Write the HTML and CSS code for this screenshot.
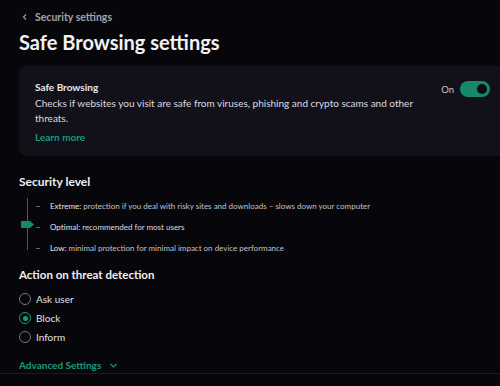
FILE: index.html
```html
<!DOCTYPE html>
<html lang="en">
  <head>
    <meta charset="UTF-8" />
    <meta name="viewport" content="width=device-width, initial-scale=1.0" />
    <title>Safe Browsing settings</title>
    <link rel="stylesheet" href="styles.css">
  </head>
  <body>
    <div class="page">
      <!-- start header -->
      <a class="back-link" href="#">
        <svg class="back-icon" width="8" height="8" viewBox="0 0 8 8">
          <path d="M5 1.5 L2.5 4 L5 6.5" fill="none" stroke="#9a9aa2" stroke-width="1.2" />
        </svg>
        Security settings
      </a>
      <h1 class="page-title">Safe Browsing settings</h1>
      <!-- end header -->

      <!-- start card -->
      <div class="card">
        <div class="card-text">
          <p class="card-title">Safe Browsing</p>
          <p class="card-desc">Checks if websites you visit are safe from viruses, phishing and crypto scams and other threats.</p>
          <a class="learn-more" href="#">Learn more</a>
        </div>
        <div class="toggle-wrap">
          <span class="toggle-label">On</span>
          <button class="toggle is-on" onclick="toggleSwitch()"></button>
        </div>
      </div>
      <!-- end card -->

      <!-- start security level -->
      <h2 class="section-title">Security level</h2>
      <div class="levels">
        <div class="level-track">
          <div class="level-thumb"></div>
        </div>
        <ul class="level-list">
          <li class="level-item"><b>Extreme:</b> protection if you deal with risky sites and downloads – slows down your computer</li>
          <li class="level-item is-active"><b>Optimal:</b> recommended for most users</li>
          <li class="level-item"><b>Low:</b> minimal protection for minimal impact on device performance</li>
        </ul>
      </div>
      <!-- end security level -->

      <!-- start action -->
      <h2 class="section-title action-title">Action on threat detection</h2>
      <div class="radios">
        <label class="radio-row"><span class="radio"></span>Ask user</label>
        <label class="radio-row"><span class="radio is-checked"></span>Block</label>
        <label class="radio-row"><span class="radio"></span>Inform</label>
      </div>
      <a class="advanced" href="#">
        Advanced Settings
        <svg width="9" height="9" viewBox="0 0 9 9">
          <path d="M1.5 3 L4.5 6 L7.5 3" fill="none" stroke="#1a9a7b" stroke-width="1.1" />
        </svg>
      </a>
      <!-- end action -->
    </div>
    <div class="bottom-bar"></div>
    <script>
      function toggleSwitch() {
        const el = document.querySelector(".toggle");
        el.classList.toggle("is-on");
        document.querySelector(".toggle-label").innerHTML = el.classList.contains("is-on") ? "On" : "Off";
      }
    </script>
  </body>
</html>
```
FILE: styles.css
```css
body {
  margin: 0;
  background-color: #07070b;
  color: #e8e8ec;
  font-family: Lato, "Noto Sans", sans-serif;
  overflow: hidden;
  height: 386px;
  position: relative;
}
p {
  margin: 0;
}
a {
  text-decoration: none;
}
.page {
  padding: 10px 0 0 19px;
}
.back-link {
  display: flex;
  align-items: center;
  gap: 6px;
  color: #a4a4ab;
  font-size: 10.5px;
  font-weight: 700;
  height: 14px;
  margin-left: 2px;
}
.page-title {
  margin: 5px 0 0 0;
  font-size: 20px;
  font-weight: 700;
  color: #f2f2f4;
  line-height: 26px;
}
.card {
  margin-top: 11px;
  background-color: #121119;
  border-radius: 8px 0 0 8px;
  padding: 14px 10px 12px 16px;
  display: flex;
  justify-content: space-between;
  align-items: flex-start;
  height: 64px;
}
.card-title {
  font-size: 10px;
  font-weight: 700;
  line-height: 14px;
}
.card-desc {
  margin-top: 2px;
  font-size: 10px;
  line-height: 15px;
  width: 400px;
  color: #dcdce0;
}
.learn-more {
  display: block;
  margin-top: 5px;
  font-size: 10px;
  font-weight: 700;
  color: #1a9a7b;
}
.toggle-wrap {
  display: flex;
  align-items: center;
  gap: 6px;
  margin-top: 1px;
}
.toggle-label {
  font-size: 9.5px;
  color: #c8c8ce;
}
.toggle {
  width: 30px;
  height: 16px;
  border-radius: 8px;
  border: none;
  background-color: #3a3a44;
  position: relative;
  cursor: pointer;
  padding: 0;
}
.toggle::after {
  content: "";
  position: absolute;
  top: 3px;
  left: 3px;
  width: 10px;
  height: 10px;
  border-radius: 50%;
  background-color: #0b0b10;
}
.toggle.is-on {
  background-color: #16896c;
}
.toggle.is-on::after {
  left: 17px;
}
.section-title {
  margin: 18px 0 0 0;
  font-size: 12px;
  font-weight: 700;
  line-height: 16px;
  color: #f0f0f2;
}
.levels {
  display: flex;
  margin-top: 8px;
}
.level-track {
  width: 1px;
  height: 52px;
  background-color: #55555e;
  margin-left: 8px;
  position: relative;
}
.level-thumb {
  position: absolute;
  left: -6px;
  top: 23px;
  width: 13px;
  height: 7px;
  background-color: #16896c;
  clip-path: polygon(0 0, 9px 0, 13px 50%, 9px 100%, 0 100%);
}
.level-list {
  list-style: none;
  margin: 0;
  padding: 0 0 0 8px;
  display: flex;
  flex-direction: column;
  gap: 7px;
  margin-top: 1px;
}
.level-item {
  font-size: 8px;
  line-height: 14px;
  color: #c2c2c8;
  display: flex;
  gap: 3px;
  align-items: center;
}
.level-item::before {
  content: "";
  width: 4px;
  height: 1px;
  background-color: #66666e;
  margin-right: 7px;
}
.level-item b {
  font-weight: 400;
  color: #e4e4e8;
  margin-right: -1px;
}
.level-item.is-active {
  color: #dcdce0;
}
.action-title {
  margin-top: 12px;
  font-size: 11.5px;
}
.radios {
  display: flex;
  flex-direction: column;
  gap: 5px;
  margin-top: 9px;
}
.radio-row {
  display: flex;
  align-items: center;
  gap: 5px;
  font-size: 10px;
  line-height: 14px;
  color: #e0e0e4;
  cursor: pointer;
}
.radio {
  box-sizing: border-box;
  width: 12px;
  height: 12px;
  border-radius: 50%;
  border: 1px solid #74747c;
  position: relative;
}
.radio.is-checked {
  border-color: #1a9a7b;
}
.radio.is-checked::after {
  content: "";
  position: absolute;
  top: 2.5px;
  left: 2.5px;
  width: 5px;
  height: 5px;
  border-radius: 50%;
  background-color: #1a9a7b;
}
.advanced {
  display: flex;
  align-items: center;
  gap: 8px;
  margin-top: 15px;
  font-size: 10px;
  font-weight: 700;
  color: #1a9a7b;
}
.bottom-bar {
  position: absolute;
  left: 0;
  right: 0;
  top: 373px;
  height: 1px;
  background-color: #1c1b25;
}
```
